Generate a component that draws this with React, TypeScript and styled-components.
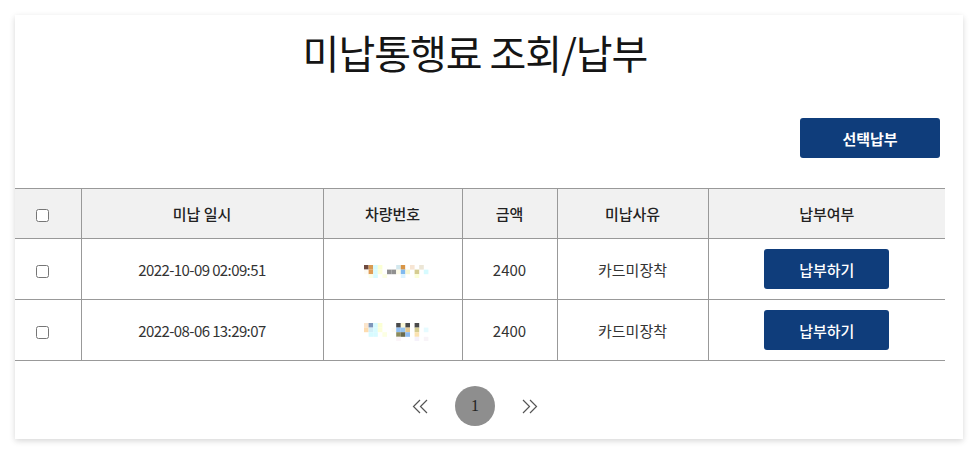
import styled, { createGlobalStyle } from 'styled-components';

// ===== GLOBAL =====
const GlobalStyle = createGlobalStyle`
  html, body {
    margin: 0;
    padding: 0;
    background: #ffffff;
  }
  body {
    font-family: 'Noto Sans CJK KR', 'Noto Sans', sans-serif;
    color: #333333;
  }
`;

// ===== DATA =====
type UnpaidRow = {
  id: number;
  date: string;
  plate: string[][]; // pixelated (blurred) plate colours
  amount: number;
  reason: string;
};

const PLATE_A: string[][] = [
  ['#6e4a40', '#d89a52', '#d6fbff', '#fbffd4', '', '', '', '#d3e8ee', '#d99545', '#fff', '#f7e5d3', '', '#ece6d6', ''],
  ['#fdfbf4', '#e09d55', '#d8fbff', '#fcffd9', '', '#909090', '#909090', '#fdfbe6', '#80b9ef', '#f9f7d0', '', '#d5cc91', '', '#d6fbff'],
  ['', '#fbfee8', '#d8fbff', '', '#fcffe3', '', '', '', '#dcf3ff', '', '', '#fcffd8', '', ''],
];

const PLATE_B: string[][] = [
  ['#fbe5cc', '#7e96ba', '#d6fbff', '#fbffd4', '', '', '', '#4a4a4a', '#fbf8d8', '#4a4a4a', '', '#4a4a4a', '', ''],
  ['#fddcb0', '#d3eef7', '#d8fbff', '#fcffd9', '', '', '#fdfbf4', '#8fbdf2', '#95c4ef', '#e5c88d', '', '#d5cc91', '', '#e6fbff'],
  ['', '#d6fbff', '#d8fbff', '', '#fcffe3', '', '', '#8b8b5c', '#6a6a4c', '#8fbdf2', '', '#fbe2b0', '', ''],
  ['', '', '', '', '', '', '', '#fbf4f8', '', '', '', '#f5f1fa', '', '#f8f4f8'],
];

const ROWS: UnpaidRow[] = [
  { id: 1, date: '2022-10-09 02:09:51', plate: PLATE_A, amount: 2400, reason: '카드미장착' },
  { id: 2, date: '2022-08-06 13:29:07', plate: PLATE_B, amount: 2400, reason: '카드미장착' },
];

// ===== STYLED COMPONENTS =====

const Page = styled.div`
  padding: 15px 16px 15px 15px;
`;

const Card = styled.div`
  background: #ffffff;
  padding: 0 18px 13px 0;
  box-shadow: 0 2px 6px rgba(0, 0, 0, 0.16);
  box-sizing: border-box;
`;

const Title = styled.h1`
  margin: 0;
  padding: 8px 10px 0 0;
  text-align: center;
  font-size: 40px;
  font-weight: 400;
  line-height: 58px;
  color: #151515;
  letter-spacing: -1px;
`;

const Toolbar = styled.div`
  display: flex;
  justify-content: flex-end;
  padding: 37px 5px 0 0;
  margin-bottom: 30px;
`;

const NavyButton = styled.button<{ $wide?: boolean }>`
  display: inline-flex;
  align-items: center;
  justify-content: center;
  width: ${(p) => (p.$wide ? '140px' : '125px')};
  height: 40px;
  border: none;
  border-radius: 3px;
  background: #0f3d7b;
  color: #ffffff;
  font-family: 'Noto Sans CJK KR', sans-serif;
  font-size: 15px;
  font-weight: ${(p) => (p.$wide ? 700 : 500)};
  cursor: pointer;
  padding: 0;
`;

const Table = styled.table`
  width: 930px;
  border-collapse: collapse;
  table-layout: fixed;
  border-top: 1px solid #999999;
  font-size: 15px;
`;

const HeadCell = styled.th`
  height: 49px;
  background: #f1f1f1;
  border-bottom: 1px solid #999999;
  border-left: 1px solid #999999;
  font-weight: 500;
  color: #222222;
  text-align: center;
  padding: 0;

  &:first-child {
    border-left: none;
    padding-right: 10px;
  }
`;

const BodyCell = styled.td`
  height: 60px;
  border-bottom: 1px solid #999999;
  border-left: 1px solid #999999;
  text-align: center;
  color: #333333;
  padding: 0;

  &:first-child {
    border-left: none;
    padding-right: 10px;
  }
`;

const PlateCell = styled(BodyCell)`
  padding-left: 8px;
`;

const DateText = styled.span`
  letter-spacing: -0.6px;
`;

const CheckBox = styled.input.attrs({ type: 'checkbox' })`
  width: 13px;
  height: 13px;
  margin: 0;
  vertical-align: middle;
`;

const Pager = styled.div`
  display: flex;
  justify-content: center;
  align-items: center;
  gap: 26px;
  padding-top: 25px;
  padding-right: 10px;
`;

const PageArrow = styled.button`
  display: flex;
  align-items: center;
  justify-content: center;
  width: 18px;
  height: 18px;
  padding: 0;
  border: none;
  background: none;
  cursor: pointer;
`;

const PageNumber = styled.span`
  display: flex;
  align-items: center;
  justify-content: center;
  width: 40px;
  height: 40px;
  border-radius: 50%;
  background: #8e8e8e;
  color: #222222;
  font-family: 'Liberation Serif', serif;
  font-size: 16px;
`;

// ===== ICONS =====

function DoubleChevron({ dir }: { dir: 'left' | 'right' }) {
  const d =
    dir === 'left'
      ? 'M8 1 L1.5 7.5 L8 14 M15 1 L8.5 7.5 L15 14'
      : 'M1 1 L7.5 7.5 L1 14 M8 1 L14.5 7.5 L8 14';
  return (
    <svg width="16" height="15" viewBox="0 0 16 15" fill="none">
      <path d={d} stroke="#555" strokeWidth="1.2" />
    </svg>
  );
}

function PixelPlate({ pixels }: { pixels: string[][] }) {
  const size = 4.6;
  const cols = pixels[0].length;
  return (
    <svg width={cols * size} height={pixels.length * size} style={{ display: 'inline-block', verticalAlign: 'middle' }}>
      {pixels.map((row, y) =>
        row.map((c, x) =>
          c ? <rect key={`${x}-${y}`} x={x * size} y={y * size} width={size} height={size} fill={c} /> : null
        )
      )}
    </svg>
  );
}

// ===== COMPONENT =====

export default function App() {
  return (
    <Page>
      <GlobalStyle />
      <Card>
        <Title>미납통행료 조회/납부</Title>

        <Toolbar>
          <NavyButton $wide>선택납부</NavyButton>
        </Toolbar>

        <Table>
          <colgroup>
            <col style={{ width: 66 }} />
            <col style={{ width: 242 }} />
            <col style={{ width: 139 }} />
            <col style={{ width: 95 }} />
            <col style={{ width: 151 }} />
            <col style={{ width: 237 }} />
          </colgroup>
          <thead>
            <tr>
              <HeadCell>
                <CheckBox />
              </HeadCell>
              <HeadCell>미납 일시</HeadCell>
              <HeadCell>차량번호</HeadCell>
              <HeadCell>금액</HeadCell>
              <HeadCell>미납사유</HeadCell>
              <HeadCell>납부여부</HeadCell>
            </tr>
          </thead>
          <tbody>
            {ROWS.map((row) => (
              <tr key={row.id}>
                <BodyCell>
                  <CheckBox />
                </BodyCell>
                <BodyCell>
                  <DateText>{row.date}</DateText>
                </BodyCell>
                <PlateCell>
                  <PixelPlate pixels={row.plate} />
                </PlateCell>
                <BodyCell>{row.amount}</BodyCell>
                <BodyCell>{row.reason}</BodyCell>
                <BodyCell>
                  <NavyButton>납부하기</NavyButton>
                </BodyCell>
              </tr>
            ))}
          </tbody>
        </Table>

        <Pager>
          <PageArrow aria-label="first">
            <DoubleChevron dir="left" />
          </PageArrow>
          <PageNumber>1</PageNumber>
          <PageArrow aria-label="last">
            <DoubleChevron dir="right" />
          </PageArrow>
        </Pager>
      </Card>
    </Page>
  );
}
